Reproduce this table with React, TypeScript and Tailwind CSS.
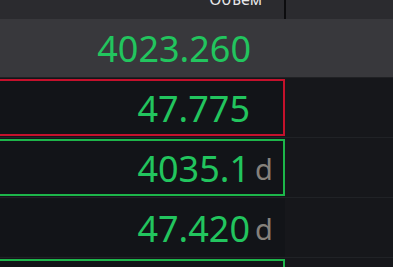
const rows = [
  { value: "47.775", border: "border-[#c4112c]", suffix: false },
  { value: "4035.1", border: "border-[#1db54a]", suffix: true },
  { value: "47.420", border: "border-transparent", suffix: true },
  { value: "4041.0", border: "border-[#1db54a]", suffix: true },
];

const font = { fontFamily: '"Noto Sans", "DejaVu Sans", sans-serif' };

export default function App() {
  return (
    <div className="w-[393px] h-[267px] overflow-hidden bg-[#141519]" style={font}>
      {/* header */}
      <div className="flex h-[19px] bg-[#2b2b2f]">
        <div className="w-[284px] overflow-hidden flex justify-end pr-[22px]">
          <span className="text-[16px] leading-none -mt-[9px] text-[#e8e8ea]">Объём</span>
        </div>
        <div className="w-[2px] bg-[#0c0c0e]" />
        <div className="flex-1" />
      </div>

      {/* last price */}
      <div className="flex h-[59px] bg-[#38383c] border-b border-[#202124]">
        <div className="w-[284px] flex items-center justify-end pr-[33px] pt-[2px]">
          <span className="text-[36px] leading-none text-[#22c55e]">4023.260</span>
        </div>
      </div>

      {rows.map((r, i) => (
        <div key={i} className="flex h-[60px] border-b border-[#202226]">
          <div className="w-[285px] py-[1px]">
            <div
              className={`h-full -ml-[2px] border-[2.5px] ${r.border} bg-[#121418] flex items-center justify-end pr-[6px] pt-[2px]`}
            >
              <span className="text-[36px] leading-none text-[#22c55e]">{r.value}</span>
              <span className="w-[27px] pl-[5px] text-[29px] leading-none text-[#85817c]">
                {r.suffix ? "d" : ""}
              </span>
            </div>
          </div>
          <div className="flex-1 bg-[#16171b]" />
        </div>
      ))}
    </div>
  );
}
